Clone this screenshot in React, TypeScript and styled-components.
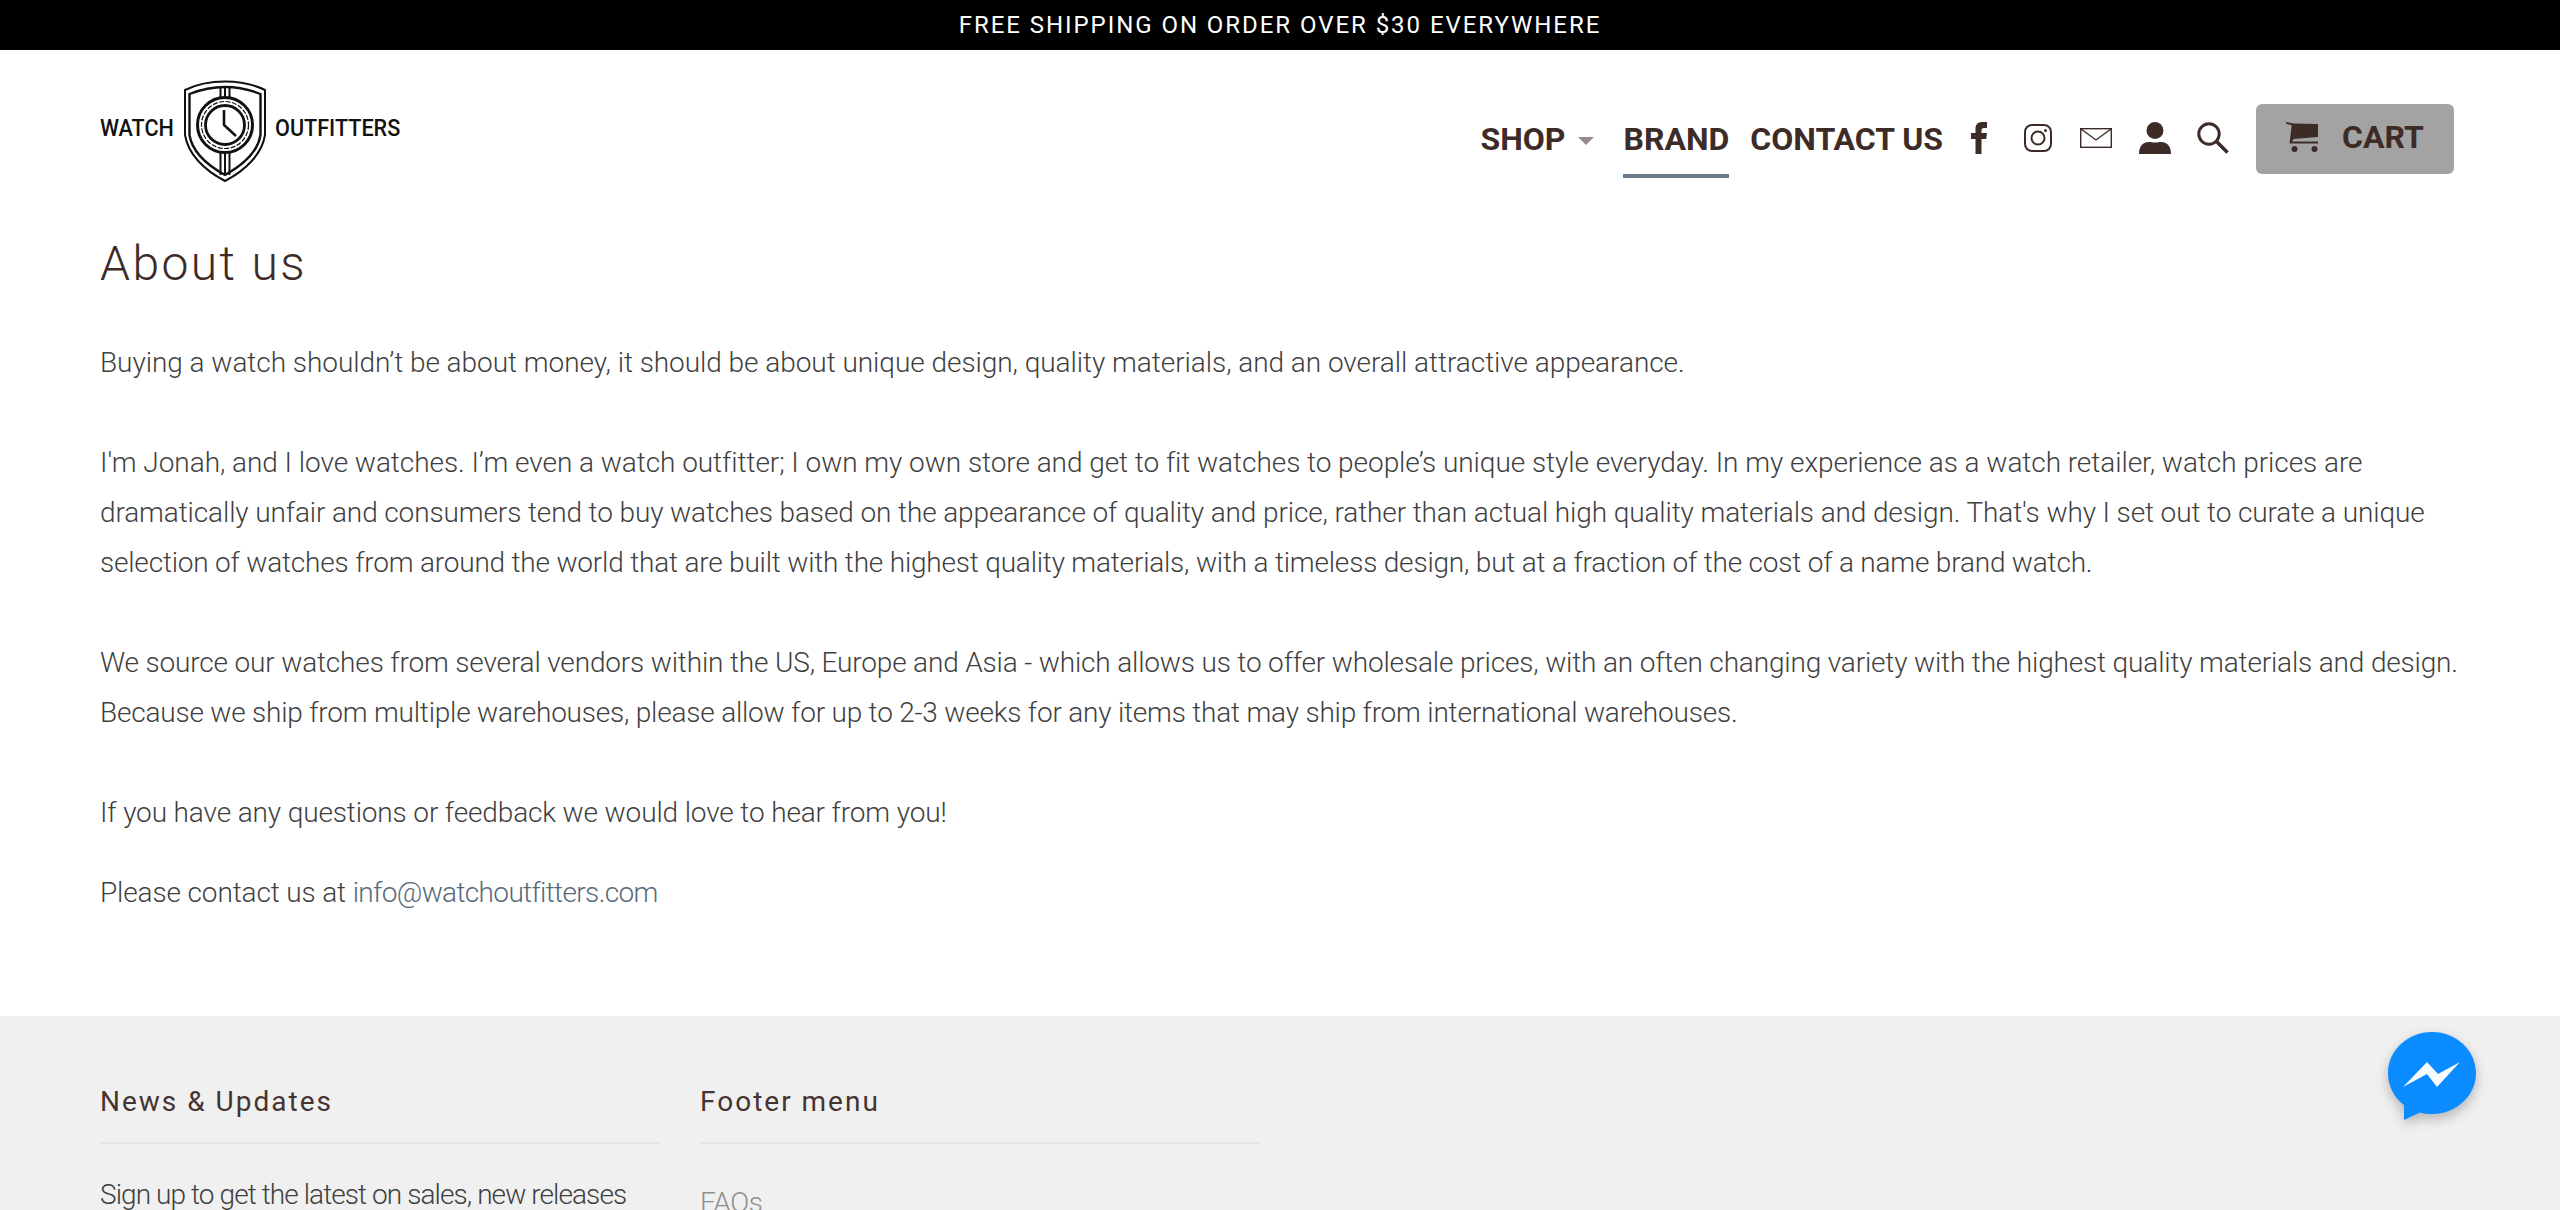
import React from 'react';
import styled, { createGlobalStyle } from 'styled-components';

const Global = createGlobalStyle`
  html, body { margin: 0; padding: 0; background: #fff; overflow: hidden; height: 1210px; }
  body { font-family: Roboto, Arial, sans-serif; }
`;
const Page = styled.div`width: 2560px; height: 1210px; overflow: hidden;`;
const Announcement = styled.div`
  height: 50px; background: #000; color: #fff; display: flex; align-items: center; justify-content: center;
  font: 400 24px/49px Roboto, sans-serif; letter-spacing: 1.95px;
`;
const Header = styled.header`
  height: 161px; box-sizing: border-box; padding: 30px 106px 0 100px; display: flex; justify-content: space-between; align-items: flex-start;
`;
const Logo = styled.a`display: flex; align-items: center; height: 102px; color: #111; font: 500 24px/1 Roboto, sans-serif;`;
const LogoWord = styled.span<{ $w: number }>`width: ${p => p.$w}px; padding-bottom: 6px; white-space: nowrap; display: block; transform: scaleX(.9); transform-origin: left center;`;
const Nav = styled.nav`display: flex; align-items: flex-start; margin-top: 24px; color: #3d2b28;`;
const NavLink = styled.a<{ $active?: boolean }>`
  display: flex; align-items: center; height: 74px; box-sizing: border-box; margin-right: ${p => p.$active ? 21 : 0}px;
  font: 700 32px/1 Roboto, sans-serif; white-space: nowrap;
  border-bottom: 4px solid ${p => p.$active ? '#6b7d8d' : 'transparent'};
`;
const Caret = styled.i`display: block; width: 0; height: 0; border: solid transparent; border-width: 8px 8px 0; border-top-color: #948c8a; margin: 4px 0 0 13px;`;
const ShopWrap = styled.div`display: flex; width: 143px;`;
const IconSlot = styled.span<{ $w: number }>`display: flex; align-items: center; justify-content: center; width: ${p => p.$w}px; height: 68px;`;
const CartButton = styled.a`
  width: 198px; height: 70px; margin-left: 8px; box-sizing: border-box; padding: 0 0 4px 30px; border-radius: 6px; background: #a3a3a3;
  display: flex; align-items: center; gap: 24px; font: 700 32px/1 Roboto, sans-serif; color: #3d2b28;
`;
const Main = styled.main`padding: 23px 100px 0; height: 805px; box-sizing: border-box;`;
const Title = styled.h1`margin: 0 0 44px; font: 300 48px/60px Roboto, sans-serif; letter-spacing: 2.4px; color: #3d2b28;`;
const Para = styled.p<{ $gap?: number }>`
  margin: 0 0 ${p => p.$gap ?? 50}px; font: 300 28px/50px Roboto, sans-serif; color: #3f3f3f; white-space: nowrap;
`;
const Line = styled.span<{ $track: number }>`display: block; letter-spacing: ${p => p.$track}px;`;
const MailLink = styled.a`color: #56697b; text-decoration: none; letter-spacing: -.65px;`;
const Footer = styled.footer`background: #f0f0f0; height: 194px; padding: 0 100px; display: flex; gap: 40px;`;
const FooterCol = styled.div`width: 560px; padding-top: 65px;`;
const FooterTitle = styled.h4`
  margin: 0 0 34px; font: 400 28px/42px Roboto, sans-serif; letter-spacing: 2px; color: #453431; padding-bottom: 19px; border-bottom: 2px solid #e6e6e6;
`;
const FooterText = styled.p`margin: -8px 0 0; font: 300 28px/50px Roboto, sans-serif; color: #3f3f3f; letter-spacing: -.92px; white-space: nowrap;`;
const FooterLink = styled.a`display: block; margin-top: 2px; font: 300 28px/50px Roboto, sans-serif; color: #8f8f8f; letter-spacing: -.3px;`;
const Chat = styled.div`position: fixed; left: 2380px; top: 1026px; width: 104px; height: 104px; filter: drop-shadow(0 5px 6px rgba(0,0,0,.25));`;

const Shield = () => (
  <svg width="82" height="102" viewBox="0 0 82 102" fill="none" stroke="#111" style={{ margin: '0 9px 0 13px' }}>
    <path d="M1 10C13 4 27 1.500 41 1.500S69 4 81 10v45C78 74 62 90 41 101 20 90 4 74 1 55Z" strokeWidth="2" />
    <path d="M5.500 14C17 9.500 29 7 41 7s24 2.500 35.500 7v41C74 71 59 85 41 95 23 85 8 71 5.500 55Z" strokeWidth="2.400" />
    <path d="M36.500 7v11M41 7v11M45.500 7v11M36.500 73v22M41 73v22M45.500 73v22" strokeWidth="2" />
    <circle cx="41" cy="45" r="27.500" strokeWidth="3" fill="#fff" />
    <circle cx="41" cy="45" r="23.500" strokeWidth="1.200" strokeDasharray="5 1.500" />
    <circle cx="41" cy="45" r="19.500" strokeWidth="2.800" />
    <path d="M40 30v15l12 11" strokeWidth="2.600" />
  </svg>
);

export default function App() {
  return (
    <Page>
      <Global />
      <Announcement>FREE SHIPPING ON ORDER OVER $30 EVERYWHERE</Announcement>
      <Header>
        <Logo>
          <LogoWord $w={71}>WATCH</LogoWord>
          <Shield />
          <LogoWord $w={125}>OUTFITTERS</LogoWord>
        </Logo>
        <Nav>
          <ShopWrap><NavLink>SHOP<Caret /></NavLink></ShopWrap>
          <NavLink $active>BRAND</NavLink>
          <NavLink>CONTACT US</NavLink>
          <IconSlot $w={72}>
            <svg width="16" height="32" viewBox="0 0 16 32" fill="#3d2b28"><path d="M4.500 32V17H0v-6h4.500V6.500C4.500 2 7.500 0 11 0h5v6h-3c-1.700 0-2.500.8-2.500 2.500V11H16l-.8 6h-4.700v15Z" /></svg>
          </IconSlot>
          <IconSlot $w={45}>
            <svg width="28" height="28" viewBox="0 0 28 28" fill="none" stroke="#3d2b28" strokeWidth="2"><rect x="1" y="1" width="26" height="26" rx="7" /><circle cx="14" cy="14" r="6.500" /><circle cx="21.500" cy="6.500" r="1.500" fill="#3d2b28" stroke="none" /></svg>
          </IconSlot>
          <IconSlot $w={72}>
            <svg width="32" height="20" viewBox="0 0 32 20" fill="none" stroke="#3d2b28" strokeWidth="1.400"><rect x=".7" y=".7" width="30.600" height="18.600" /><path d="M1 1l15 11L31 1" /></svg>
          </IconSlot>
          <IconSlot $w={46}>
            <svg width="32" height="32" viewBox="0 0 32 32" fill="#3d2b28"><circle cx="16" cy="8.500" r="8.500" /><path d="M0 32c0-7 3-12 10-12 2 0 3.500.6 6 .6s4-.6 6-.6c7 0 10 5 10 12Z" /></svg>
          </IconSlot>
          <IconSlot $w={70}>
            <svg width="32" height="32" viewBox="0 0 32 32" fill="none" stroke="#3d2b28"><circle cx="12" cy="12" r="10.200" strokeWidth="3" /><path d="M19.500 19.500L30.500 30.500" strokeWidth="3.600" /></svg>
          </IconSlot>
          <CartButton>
            <svg width="32" height="30" viewBox="0 0 32 30" fill="#3d2b28"><path d="M0 0l8 1.500L32 2v13L7.500 17 6 19.500h26v2H3.500L5.700 3.200 0 1.800Z" /><circle cx="8.500" cy="27" r="3" /><circle cx="28.500" cy="27" r="3" /></svg>
            CART
          </CartButton>
        </Nav>
      </Header>
      <Main>
        <Title>About us</Title>
        <Para><Line $track={-.05}>Buying a watch shouldn’t be about money, it should be about unique design, quality materials, and an overall attractive appearance.</Line></Para>
        <Para>
          <Line $track={-.06}>I'm Jonah, and I love watches. I’m even a watch outfitter; I own my own store and get to fit watches to people’s unique style everyday. In my experience as a watch retailer, watch prices are</Line>
          <Line $track={-.12}>dramatically unfair and consumers tend to buy watches based on the appearance of quality and price, rather than actual high quality materials and design. That's why I set out to curate a unique</Line>
          <Line $track={-.2}>selection of watches from around the world that are built with the highest quality materials, with a timeless design, but at a fraction of the cost of a name brand watch.</Line>
        </Para>
        <Para>
          <Line $track={-.165}>We source our watches from several vendors within the US, Europe and Asia - which allows us to offer wholesale prices, with an often changing variety with the highest quality materials and design.</Line>
          <Line $track={-.21}>Because we ship from multiple warehouses, please allow for up to 2-3 weeks for any items that may ship from international warehouses.</Line>
        </Para>
        <Para $gap={30}><Line $track={-.14}>If you have any questions or feedback we would love to hear from you!</Line></Para>
        <Para><Line $track={-.14}>Please contact us at <MailLink href="#">info@watchoutfitters.com</MailLink></Line></Para>
      </Main>
      <Footer>
        <FooterCol>
          <FooterTitle>News &amp; Updates</FooterTitle>
          <FooterText>Sign up to get the latest on sales, new releases</FooterText>
        </FooterCol>
        <FooterCol>
          <FooterTitle>Footer menu</FooterTitle>
          <FooterLink>FAQs</FooterLink>
        </FooterCol>
      </Footer>
      <Chat>
        <svg width="104" height="104" viewBox="0 0 104 104"><path d="M52 6C27.700 6 8 24.400 8 47c0 13 6 24.600 16 32v15l16-7.500c3.700 1 7.800 1.500 12 1.500 24.300 0 44-18.400 44-41S76.300 6 52 6Z" fill="#0a8bff" /><path d="M23 61L47 36 58 48 80 36 57 61 47 48Z" fill="#f8fafc" /></svg>
      </Chat>
    </Page>
  );
}
